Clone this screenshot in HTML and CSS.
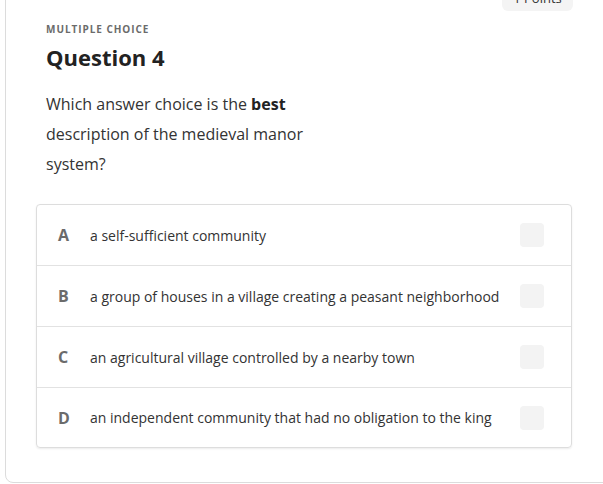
FILE: index.html
```html
<!DOCTYPE html>
<html lang="en">
<head>
<meta charset="utf-8">
<title>Question 4</title>
<link rel="stylesheet" href="styles.css">
</head>
<body>
<div class="card">
  <div class="topbar">
    <span class="points">1 Points</span>
  </div>
  <div class="kind">MULTIPLE CHOICE</div>
  <h1 class="title">Question 4</h1>
  <p class="prompt">Which answer choice is the <strong>best</strong> description of the medieval manor system?</p>
  <ul class="answers">
    <li class="answer"><span class="letter">A</span><span class="text">a self-sufficient community</span><span class="check"></span></li>
    <li class="answer"><span class="letter">B</span><span class="text">a group of houses in a village creating a peasant neighborhood</span><span class="check"></span></li>
    <li class="answer"><span class="letter">C</span><span class="text">an agricultural village controlled by a nearby town</span><span class="check"></span></li>
    <li class="answer"><span class="letter">D</span><span class="text">an independent community that had no obligation to the king</span><span class="check"></span></li>
  </ul>
</div>
</body>
</html>
```
FILE: styles.css
```css
html, body {
  margin: 0;
  padding: 0;
  background: #ffffff;
  overflow: hidden;
}
body {
  font-family: "Open Sans", "Liberation Sans", sans-serif;
  color: #333333;
  height: 484px;
}
.card {
  margin: -30px -40px 0 5px;
  height: 513px;
  border: 1px solid #dcdcdc;
  border-radius: 8px;
  padding: 0 70px 0 40px;
  box-sizing: border-box;
  display: flex;
  flex-direction: column;
}
.topbar {
  display: flex;
  justify-content: flex-end;
  margin-top: 13px;
  height: 27px;
}
.points {
  background: #f4f4f4;
  border-radius: 6px;
  width: 71px;
  height: 27px;
  display: flex;
  align-items: center;
  justify-content: center;
  font-size: 13px;
  color: #333;
  margin-right: -1px;
}
.kind {
  margin-top: 11px;
  font-size: 10px;
  font-weight: 700;
  letter-spacing: 0.95px;
  color: #6b6b6b;
  line-height: 14px;
}
.title {
  margin: 6px 0 0 0;
  font-size: 22px;
  font-weight: 700;
  color: #222222;
  line-height: 30px;
}
.prompt {
  margin: 17px 0 0 0;
  width: 275px;
  font-size: 16px;
  line-height: 30px;
  color: #333333;
}
.prompt strong {
  font-weight: 700;
  color: #222;
}
.answers {
  list-style: none;
  margin: 25px 0 0 -10px;
  padding: 0;
  border: 1px solid #dddddd;
  border-radius: 4px;
  box-shadow: 0 1px 2px rgba(0,0,0,0.08);
}
.answer {
  display: flex;
  align-items: center;
  height: 60px;
  padding: 0 27px 0 21px;
  border-top: 1px solid #e2e2e2;
}
.answer:first-child {
  border-top: none;
}
.answer:last-child {
  height: 59px;
}
.letter {
  flex: none;
  width: 32px;
  font-size: 16px;
  font-weight: 700;
  color: #6b6b6b;
}
.text {
  flex: 1;
  font-size: 14px;
  color: #333333;
}
.check {
  flex: none;
  width: 24px;
  height: 24px;
  border-radius: 4px;
  background: #f3f3f3;
}
```
